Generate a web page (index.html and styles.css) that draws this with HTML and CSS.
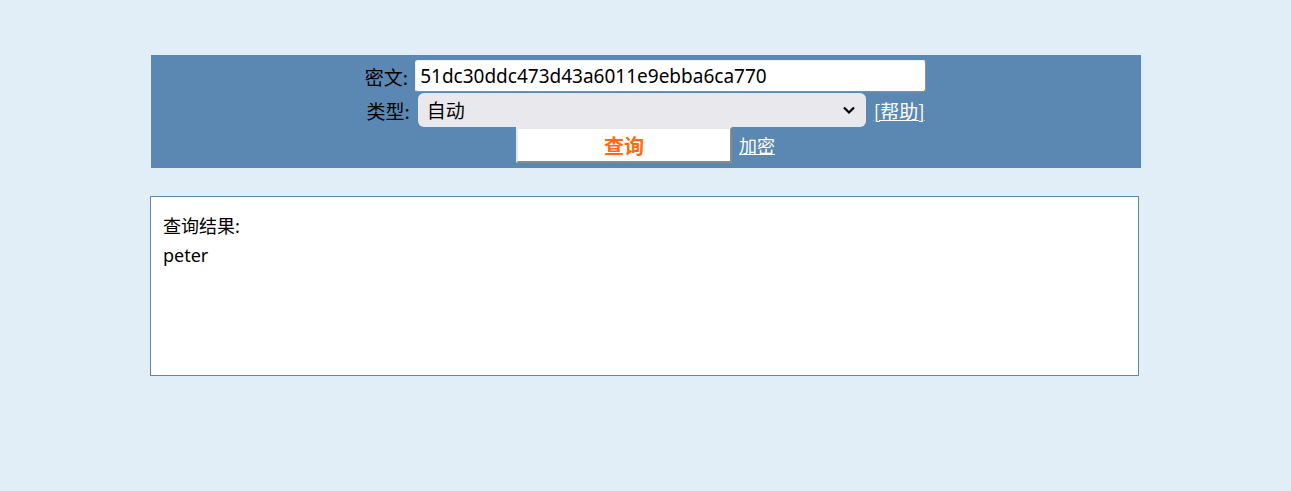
FILE: index.html
```html
<!DOCTYPE html>
<html lang="zh">
<head>
<meta charset="utf-8">
<title>查询</title>
<link rel="stylesheet" href="styles.css">
</head>
<body>
<div class="panel">
  <div class="row">
    <span class="label">密文:</span>
    <input class="cipher" type="text" value="51dc30ddc473d43a6011e9ebba6ca770">
  </div>
  <div class="row row-2">
    <span class="label">类型:</span>
    <div class="select">
      <span>自动</span>
      <svg class="chev" width="14" height="10" viewBox="0 0 14 10"><path d="M2 2.5 L7 7.5 L12 2.5" fill="none" stroke="#000" stroke-width="2.2"/></svg>
    </div>
    <a class="link" href="#">[帮助]</a>
  </div>
  <div class="row">
    <button class="btn" type="button">查询</button>
    <a class="link link-b" href="#">加密</a>
  </div>
</div>
<div class="result">
  <div class="rtitle">查询结果:</div>
  <div class="rval">peter</div>
</div>
</body>
</html>
```
FILE: styles.css
```css
html, body {
  margin: 0;
  padding: 0;
  background: #e1eef7;
}
body {
  font-family: "Noto Sans", "Noto Sans CJK SC", sans-serif;
  color: #000;
  padding-top: 55px;
}
.panel {
  width: 990px;
  margin: 0 auto;
  background: #5b88b2;
  padding: 5px 0 5px;
  box-sizing: border-box;
  height: 113px;
}
.row {
  display: flex;
  justify-content: center;
  align-items: center;
}
.row-2 {
  margin-top: 1px;
}
.label {
  font-family: "Noto Sans CJK SC", sans-serif;
  font-size: 19px;
  margin-right: 7px;
  line-height: 1;
}
.cipher {
  width: 511px;
  height: 32px;
  box-sizing: border-box;
  border: 1px solid;
  border-color: #f0f0f0 #8f8f8f #8f8f8f #f0f0f0;
  border-radius: 3px;
  background: #fff;
  font-family: "Noto Sans", sans-serif;
  font-size: 19px;
  padding: 0 4px;
  color: #000;
  margin: 0;
}
.select {
  width: 448px;
  height: 34px;
  box-sizing: border-box;
  background: #e9e8ed;
  border-radius: 6px;
  display: flex;
  align-items: center;
  justify-content: space-between;
  padding: 0 10px 0 9px;
  font-size: 19px;
  margin-left: 1px;
}
.chev {
  display: block;
}
.link {
  color: #fff;
  font-family: "Noto Sans CJK SC", sans-serif;
  font-size: 19px;
  margin-left: 8px;
  text-decoration: underline;
}
.btn {
  width: 216px;
  height: 36px;
  flex: none;
  box-sizing: border-box;
  background: #fff;
  border: 2px solid;
  border-color: #e8e8e8 #8a8a8a #8a8a8a #e8e8e8;
  color: #ff6a0c;
  font-family: "Noto Sans CJK SC", sans-serif;
  font-weight: bold;
  font-size: 20px;
  padding: 0;
  margin: 0;
}
.link-b {
  font-size: 18px;
  margin-left: 7px;
}
.result {
  width: 989px;
  height: 180px;
  box-sizing: border-box;
  margin: 28px 0 0 150px;
  background: #fff;
  border: 1px solid #5f87aa;
  padding: 15px 12px;
  font-size: 18px;
  line-height: 29px;
}
```
